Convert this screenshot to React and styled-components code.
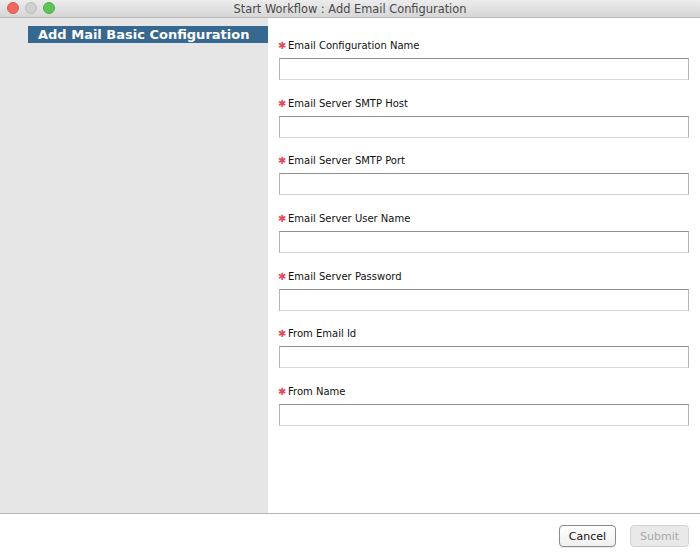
import React from "react";
import styled, { createGlobalStyle } from "styled-components";

const Global = createGlobalStyle`
  html, body { margin: 0; padding: 0; background: #ffffff; }
  body { font-family: "DejaVu Sans", "Liberation Sans", sans-serif; }
  * { box-sizing: border-box; }
`;

const Window = styled.div`
  width: 700px;
  height: 558px;
  display: flex;
  flex-direction: column;
  background: #ffffff;
  overflow: hidden;
`;

const TitleBar = styled.div`
  height: 18px;
  flex: none;
  display: flex;
  align-items: center;
  position: relative;
  background: linear-gradient(#ececec, #d6d6d6);
  border-bottom: 1px solid #b8b8b8;
`;

const Lights = styled.div`
  position: absolute;
  left: 7px;
  top: 2px;
  display: flex;
  gap: 6px;
`;

const Light = styled.span`
  width: 12px;
  height: 12px;
  border-radius: 50%;
  background: ${(p) => p.$c};
  border: 1px solid ${(p) => p.$b};
`;

const Title = styled.div`
  flex: 1;
  text-align: center;
  font-size: 11.4px;
  color: #4a4a4a;
  font-family: "DejaVu Sans", sans-serif;
`;

const Main = styled.div`
  flex: 1;
  display: flex;
  min-height: 0;
`;

const Sidebar = styled.div`
  width: 268px;
  flex: none;
  background: #e6e6e6;
  padding: 8px 0 0 28px;
`;

const SideHeader = styled.div`
  height: 17px;
  background: #376990;
  color: #ffffff;
  font-weight: bold;
  font-size: 13px;
  line-height: 17px;
  padding-left: 10px;
  white-space: nowrap;
`;

const Form = styled.div`
  flex: 1;
  padding: 21px 11px 0 11px;
  display: flex;
  flex-direction: column;
  gap: 16.67px;
`;

const Field = styled.div`
  display: flex;
  flex-direction: column;
`;

const Label = styled.div`
  height: 14px;
  line-height: 14px;
  font-size: 10px;
  color: #111;
  display: flex;
  align-items: center;
  margin-bottom: 5px;
  white-space: nowrap;
`;

const Star = styled.span`
  color: #e24a5e;
  font-size: 10px;
  width: 10px;
  display: inline-block;
  margin-left: -1px;
`;

const Input = styled.input`
  height: 22px;
  width: 410px;
  border: 1px solid #b4b4b4;
  border-top-color: #8e8e8e;
  border-bottom-color: #d4d4d4;
  background: #fff;
  padding: 0 4px;
  font-size: 11px;
  outline: none;
  margin: 0;
`;

const Footer = styled.div`
  height: 45px;
  flex: none;
  border-top: 1px solid #b6b6b6;
  display: flex;
  justify-content: flex-end;
  align-items: flex-start;
  padding: 11px 11px 0 0;
  gap: 14px;
`;

const Button = styled.button`
  height: 22px;
  width: ${(p) => p.$w}px;
  font-family: "DejaVu Sans", sans-serif;
  font-size: 11px;
  border-radius: 4px;
  padding: 0;
  color: ${(p) => (p.disabled ? "#a8a8a8" : "#111")};
  background: ${(p) =>
    p.disabled ? "#e9e9ea" : "linear-gradient(#ffffff, #f0f0f0)"};
  border: 1px solid ${(p) => (p.disabled ? "#d2d2d2" : "#8a8a8a")};
  box-shadow: ${(p) => (p.disabled ? "none" : "0 1px 0 rgba(0,0,0,0.08)")};
`;

const fields = [
  "Email Configuration Name",
  "Email Server SMTP Host",
  "Email Server SMTP Port",
  "Email Server User Name",
  "Email Server Password",
  "From Email Id",
  "From Name",
];

export default function App() {
  return (
    <>
      <Global />
      <Window>
        <TitleBar>
          <Lights>
            <Light $c="#ee6a5f" $b="#d65a50" />
            <Light $c="#d0d0d0" $b="#bdbdbd" />
            <Light $c="#5fc454" $b="#4fae45" />
          </Lights>
          <Title>Start Workflow : Add Email Configuration</Title>
        </TitleBar>
        <Main>
          <Sidebar>
            <SideHeader>Add Mail Basic Configuration</SideHeader>
          </Sidebar>
          <Form>
            {fields.map((f) => (
              <Field key={f}>
                <Label>
                  <Star>✱</Star>
                  {f}
                </Label>
                <Input type={f.includes("Password") ? "password" : "text"} />
              </Field>
            ))}
          </Form>
        </Main>
        <Footer>
          <Button $w={57}>Cancel</Button>
          <Button $w={59} disabled>
            Submit
          </Button>
        </Footer>
      </Window>
    </>
  );
}
